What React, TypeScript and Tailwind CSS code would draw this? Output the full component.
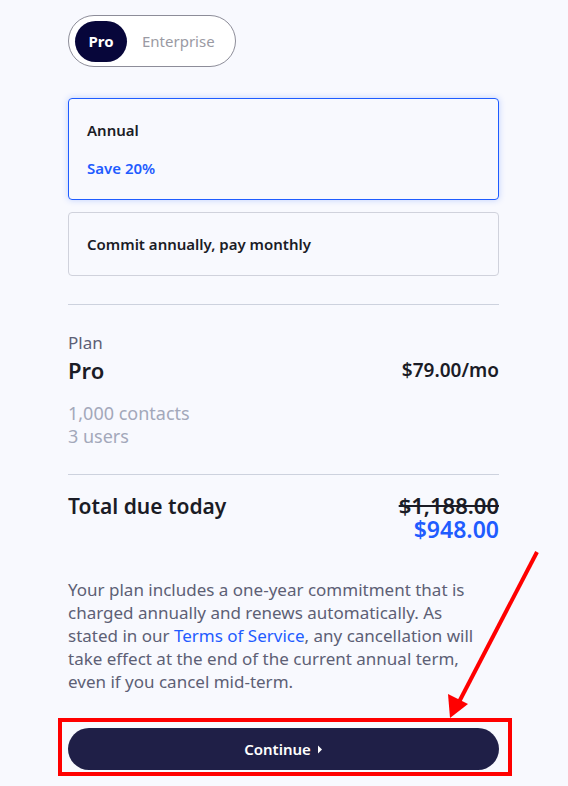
const font = { fontFamily: '"Noto Sans", "Open Sans", sans-serif' }

export default function App() {
  return (
    <div className="relative min-h-[786px] w-full bg-[#f8f9fe] text-[#1b1c26]" style={font}>
      <div className="w-[431px] pt-[15px] ml-[68px]">
        <div className="inline-flex h-[52px] items-center rounded-full border border-[#8d8d99] bg-white pl-[6px] pr-[20px]">
          <span className="flex h-[41px] w-[52px] items-center justify-center rounded-full bg-[#07063a] text-[15px] font-bold text-white">
            Pro
          </span>
          <span className="ml-[15px] text-[15px] text-[#9a9aa3]">Enterprise</span>
        </div>

        <div className="mt-[31px] flex flex-col gap-[12px]">
          <div className="h-[102px] rounded-[4px] border border-[#1f5cff] px-[18px] pt-[19px] shadow-[0_0_6px_rgba(31,92,255,0.25)]">
            <div className="text-[15px] font-semibold leading-[24px]">Annual</div>
            <div className="mt-[14px] text-[15px] font-semibold leading-[24px] text-[#1f5cff]">Save 20%</div>
          </div>
          <div className="flex h-[64px] items-center rounded-[4px] border border-[#d0d2dc] px-[18px]">
            <span className="text-[15px] font-semibold">Commit annually, pay monthly</span>
          </div>
        </div>

        <div className="mt-[28px] border-t border-[#cdd2de]" />

        <div className="pt-[27px]">
          <div className="text-[17px] leading-[22px] text-[#5d6075]">Plan</div>
          <div className="flex items-center justify-between">
            <span className="text-[22px] font-semibold leading-[32px]">Pro</span>
            <span className="text-[19px] font-semibold">$79.00/mo</span>
          </div>
          <div className="mt-[16px] text-[18px] leading-[23px] text-[#a3a8ba]">
            <div>1,000 contacts</div>
            <div>3 users</div>
          </div>
        </div>

        <div className="mt-[26px] border-t border-[#cdd2de]" />

        <div className="flex justify-between pt-[17px]">
          <span className="text-[21px] font-semibold leading-[28px]">Total due today</span>
          <div className="flex flex-col items-end pt-[1px]">
            <span className="text-[22px] font-semibold leading-[24px] line-through">$1,188.00</span>
            <span className="text-[23px] font-semibold leading-[24px] text-[#1f5cff]">$948.00</span>
          </div>
        </div>

        <p className="mt-[37px] text-[17px] leading-[23px] text-[#5d6075]">
          Your plan includes a one-year commitment that is
          <br />
          charged annually and renews automatically. As
          <br />
          stated in our <span className="text-[#1f5cff]">Terms of Service</span>, any cancellation will
          <br />
          take effect at the end of the current annual term,
          <br />
          even if you cancel mid-term.
        </p>

        <div className="mt-[35px]">
          <button className="flex h-[42px] w-full items-center justify-center gap-[6px] rounded-full bg-[#1f1f47] text-[15px] font-semibold text-white">
            Continue
            <svg width="6" height="9" viewBox="0 0 6 9">
              <path d="M1 0.5 L5 4.5 L1 8.5 Z" fill="white" />
            </svg>
          </button>
        </div>
      </div>

      <div className="pointer-events-none absolute left-[58px] top-[718px] h-[58px] w-[454px] border-4 border-[#ff0000]" />
      <svg className="pointer-events-none absolute left-0 top-0" width="568" height="786">
        <line x1="537" y1="552" x2="459" y2="702" stroke="#ff0000" strokeWidth="4" />
        <polygon points="450,718 448,694 468,704" fill="#ff0000" />
      </svg>
    </div>
  )
}
